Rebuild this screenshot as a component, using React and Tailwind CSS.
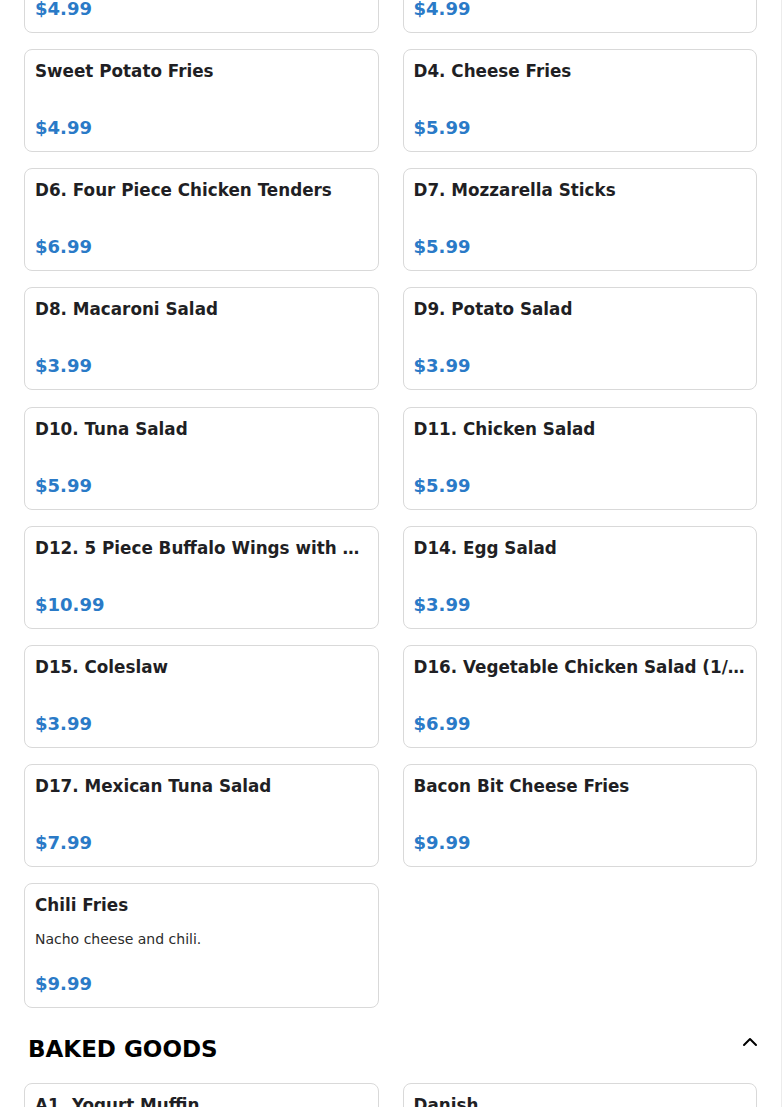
import { ChevronUp } from 'lucide-react'

const dinnerItems = [
  { name: 'Onion Rings', price: '$4.99' },
  { name: 'French Fries', price: '$4.99' },
  { name: 'Sweet Potato Fries', price: '$4.99' },
  { name: 'D4. Cheese Fries', price: '$5.99' },
  { name: 'D6. Four Piece Chicken Tenders', price: '$6.99' },
  { name: 'D7. Mozzarella Sticks', price: '$5.99' },
  { name: 'D8. Macaroni Salad', price: '$3.99' },
  { name: 'D9. Potato Salad', price: '$3.99' },
  { name: 'D10. Tuna Salad', price: '$5.99' },
  { name: 'D11. Chicken Salad', price: '$5.99' },
  { name: 'D12. 5 Piece Buffalo Wings with Blue Cheese', price: '$10.99' },
  { name: 'D14. Egg Salad', price: '$3.99' },
  { name: 'D15. Coleslaw', price: '$3.99' },
  { name: 'D16. Vegetable Chicken Salad (1/2 lb)', price: '$6.99' },
  { name: 'D17. Mexican Tuna Salad', price: '$7.99' },
  { name: 'Bacon Bit Cheese Fries', price: '$9.99' },
  { name: 'Chili Fries', desc: 'Nacho cheese and chili.', price: '$9.99' },
]

const bakedItems = [
  { name: 'A1. Yogurt Muffin', price: '$2.99' },
  { name: 'Danish', price: '$2.99' },
]

const ItemCard = ({ item }) => (
  <div className="flex flex-col rounded-[8px] border border-[#d9d9d9] bg-white px-[10px] pt-[9px] pb-[11px] min-w-0">
    <h3 className="truncate text-[16.8px] leading-[24px] font-bold text-[#1f1f24]">{item.name}</h3>
    {item.desc && (
      <p className="mt-3 text-[14px] leading-[21px] text-[#2b2b2b]">{item.desc}</p>
    )}
    <span className={`${item.desc ? 'mt-[22px]' : 'mt-[33px]'} text-[18px] leading-[24px] font-bold text-[#2a7ac7]`}>
      {item.price}
    </span>
  </div>
)

export default function App() {
  return (
    <div className="min-h-screen bg-white border-r border-[#ececec] overflow-hidden font-['DejaVu_Sans',sans-serif]">
      <div className="px-6">
        <div className="-mt-[70px] grid grid-cols-2 gap-x-6 gap-y-[16.15px]">
          {dinnerItems.map((item) => (
            <ItemCard key={item.name} item={item} />
          ))}
        </div>

        <div className="mt-[25px] mb-[18px] flex h-8 items-center justify-between pl-1">
          <h2 className="text-[23px] leading-8 font-bold text-black">BAKED GOODS</h2>
          <ChevronUp className="-mr-[5px] mb-[14px] h-6 w-6 text-black" strokeWidth={2} />
        </div>

        <div className="grid grid-cols-2 gap-x-6 gap-y-4">
          {bakedItems.map((item) => (
            <ItemCard key={item.name} item={item} />
          ))}
        </div>
      </div>
    </div>
  )
}
